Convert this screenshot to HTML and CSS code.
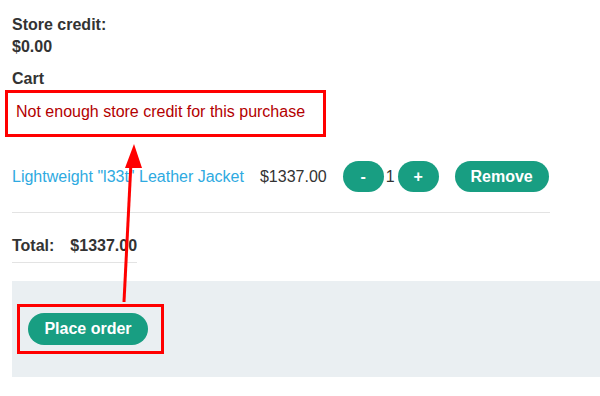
FILE: index.html
```html
<!DOCTYPE html>
<html>
<head>
	<meta charset="UTF-8">
	<title>Cart</title>
	<link rel="stylesheet" href="styles.css">
</head>
<body>
	<div id="content">
		<div class="credit">
			<div>Store credit:</div>
			<div>$0.00</div>
		</div>

		<h2 class="cart_title">Cart</h2>
		<div class="error">Not enough store credit for this purchase</div>

		<div class="cart_row">
			<a class="product" href="#">Lightweight "l33t" Leather Jacket</a>
			<span class="price">$1337.00</span>
			<div class="qty">
				<button class="btn round">-</button>
				<span class="count">1</span>
				<button class="btn round">+</button>
			</div>
			<button class="btn remove">Remove</button>
		</div>

		<div class="total">
			<span>Total:</span>
			<span>$1337.00</span>
		</div>

		<div class="checkout">
			<button class="btn place">Place order</button>
		</div>
	</div>

	<!-- annotation overlay -->
	<div class="mark mark_error"></div>
	<div class="mark mark_place"></div>
	<svg class="arrow" width="600" height="396" viewBox="0 0 600 396">
		<line x1="124" y1="302" x2="131" y2="162" stroke="#ff0000" stroke-width="3" />
		<polygon points="134,144 125,168 142,168" fill="#ff0000" />
	</svg>
</body>
</html>
```

FILE: styles.css
```css
body {
	margin: 0;
	padding: 0;
	font-family: "Liberation Sans", Arial, sans-serif;
	font-size: 16px;
	color: #333;
	background: #fff;
}

#content {
	padding: 14px 0 0 12px;
}

.credit {
	font-weight: bold;
	line-height: 22px;
}

.cart_title {
	font-size: 16px;
	margin: 10px 0 0 0;
	line-height: 22px;
}

.error {
	color: #b30000;
	padding: 12px 0 0 4px;
	line-height: 20px;
	height: 36px;
}

.cart_row {
	display: flex;
	align-items: center;
	width: 538px;
	padding: 23px 0 20px 0;
	border-bottom: 1px solid #e3e3e3;
	white-space: nowrap;
}

.cart_row > * {
	flex-shrink: 0;
}

.product {
	color: #2eaae1;
	text-decoration: none;
}

.price {
	margin-left: 16px;
}

.qty {
	display: flex;
	align-items: center;
	margin-left: 16px;
}

.count {
	margin: 0 3px 0 2px;
}

.btn {
	background: #189e82;
	color: #fff;
	border: none;
	font-family: "Liberation Sans", Arial, sans-serif;
	font-size: 16px;
	font-weight: bold;
	height: 31px;
	border-radius: 16px;
	cursor: pointer;
	padding: 0;
}

.round {
	width: 41px;
}

.remove {
	margin-left: 16px;
	width: 94px;
}

.total {
	display: flex;
	gap: 16px;
	width: 125px;
	font-weight: bold;
	padding: 24px 0 7px 0;
	border-bottom: 1px solid #e3e3e3;
}

.checkout {
	margin-top: 18px;
	background: #eaeff2;
	height: 96px;
	padding: 32px 0 0 16px;
	box-sizing: border-box;
}

.place {
	width: 120px;
	height: 32px;
}

.mark {
	position: absolute;
	border: 3px solid #ff0000;
	box-sizing: border-box;
}

.mark_error {
	left: 5px;
	top: 90px;
	width: 321px;
	height: 47px;
}

.mark_place {
	left: 17px;
	top: 304px;
	width: 147px;
	height: 50px;
}

.arrow {
	position: absolute;
	left: 0;
	top: 0;
	pointer-events: none;
}
```
